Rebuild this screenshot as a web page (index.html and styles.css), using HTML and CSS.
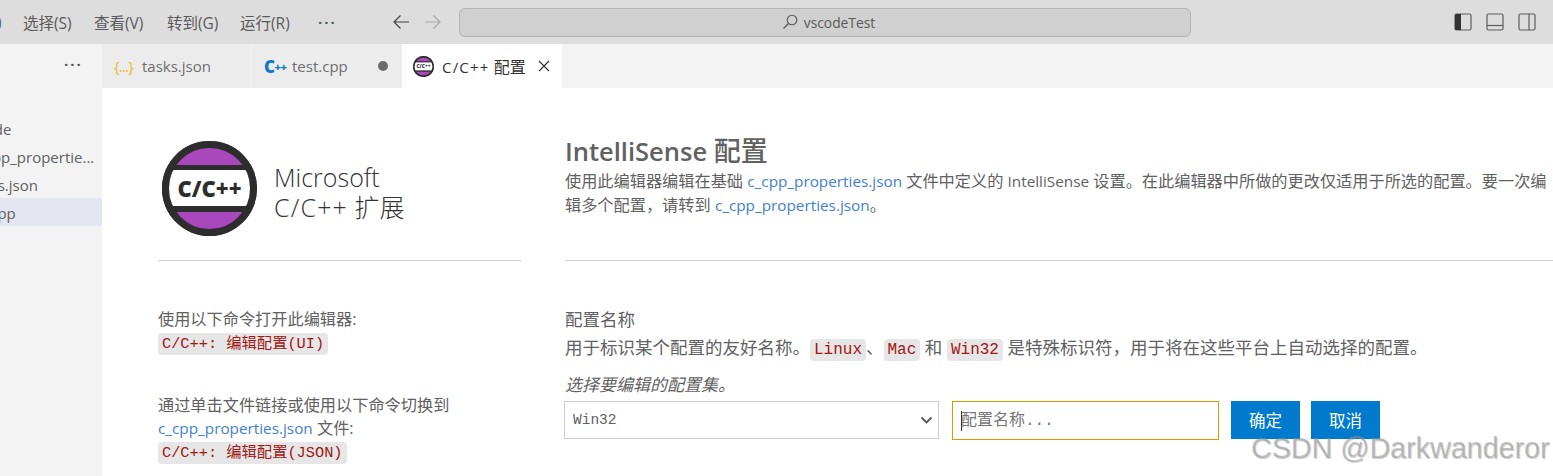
FILE: index.html
```html
<!DOCTYPE html>
<html lang="zh-CN">
<head>
<meta charset="utf-8">
<title>C/C++ 配置</title>
<link rel="stylesheet" href="styles.css">
</head>
<body>
<div class="app">
  <header class="titlebar">
    <nav class="menu">
      <span class="menu-clip">)</span>
      <span class="menu-item">选择(S)</span>
      <span class="menu-item">查看(V)</span>
      <span class="menu-item">转到(G)</span>
      <span class="menu-item">运行(R)</span>
      <span class="menu-more">···</span>
    </nav>
    <div class="nav-arrows">
      <svg class="arrow" viewBox="0 0 18 16"><path d="M17 8H2M8.5 1.5 2 8l6.5 6.5" fill="none" stroke="#424242" stroke-width="1.2"/></svg>
      <svg class="arrow" viewBox="0 0 18 16"><path d="M1 8h15M9.500 1.500 16 8l-6.500 6.500" fill="none" stroke="#a8a8a8" stroke-width="1.2"/></svg>
    </div>
    <div class="search">
      <svg class="search-icon" viewBox="0 0 16 16"><circle cx="10" cy="6" r="4.800" fill="none" stroke="#555" stroke-width="1.100"/><path d="M6.500 9.500 1.500 14.500" stroke="#555" stroke-width="1.200"/></svg>
      <span>vscodeTest</span>
    </div>
    <div class="layout-icons">
      <svg class="layout-icon" viewBox="0 0 18 18"><rect x="1" y="1" width="16" height="16" rx="1.500" fill="none" stroke="#5c5c5c" stroke-width="1.200"/><path d="M1 2.500A1.500 1.500 0 0 1 2.500 1H7v16H2.500A1.500 1.500 0 0 1 1 15.500z" fill="#333"/></svg>
      <svg class="layout-icon" viewBox="0 0 18 18"><rect x="1" y="1" width="16" height="16" rx="1.500" fill="none" stroke="#5c5c5c" stroke-width="1.200"/><path d="M1 12.500h16" stroke="#5c5c5c" stroke-width="1.200"/></svg>
      <svg class="layout-icon" viewBox="0 0 18 18"><rect x="1" y="1" width="16" height="16" rx="1.500" fill="none" stroke="#5c5c5c" stroke-width="1.200"/><path d="M11 1v16" stroke="#5c5c5c" stroke-width="1.200"/></svg>
    </div>
  </header>

  <div class="workbench">
    <aside class="sidebar">
      <div class="sidebar-head"><span class="sidebar-more">···</span></div>
      <ul class="files">
        <li class="file"><span class="file-name clip-a">.vscode</span></li>
        <li class="file"><span class="file-name clip-b">c_cpp_propertie...</span></li>
        <li class="file"><span class="file-name clip-c">tasks.json</span></li>
        <li class="file is-selected"><span class="file-name clip-d">test.cpp</span></li>
      </ul>
    </aside>

    <main class="main">
      <div class="tabs">
        <div class="tab tab-tasks"><span class="json-icon">{...}</span><span>tasks.json</span></div>
        <div class="tab tab-cpp"><span class="cpp-icon">C<span class="cpp-plus">++</span></span><span>test.cpp</span><i class="dirty"></i></div>
        <div class="tab tab-active">
          <svg class="tab-logo" viewBox="0 0 95 95"><use href="#cpp-logo"/></svg>
          <span><span class="tab-latin">C/C++</span> 配置</span>
          <svg class="tab-close" viewBox="0 0 12 12"><path d="M1 1l10 10M11 1 1 11" stroke="#333" stroke-width="1.200"/></svg>
        </div>
      </div>

      <div class="editor">
        <section class="col-left">
          <div class="brand">
            <svg class="logo" viewBox="0 0 95 95">
              <defs>
                <clipPath id="disc"><circle cx="47.500" cy="47.500" r="45"/></clipPath>
                <g id="cpp-logo">
                  <circle cx="47.500" cy="47.500" r="47.500" fill="#2d2d2d"/>
                  <g clip-path="url(#disc)">
                    <rect x="0" y="6" width="95" height="83" fill="#a947bd"/>
                    <rect x="0" y="24" width="95" height="47" fill="#2d2d2d"/>
                    <rect x="0" y="29" width="95" height="36" fill="#fff"/>
                  </g>
                  <circle cx="47.500" cy="47.500" r="44" fill="none" stroke="#2d2d2d" stroke-width="7"/>
                  <text x="47.500" y="55.500" text-anchor="middle" class="logo-text">C/C++</text>
                </g>
              </defs>
              <use href="#cpp-logo"/>
            </svg>
            <div class="brand-text">Microsoft<br><span class="brand-latin">C/C++</span> 扩展</div>
          </div>
          <div class="left-notes">
            <p class="note">使用以下命令打开此编辑器:<br><code class="cmd">C/C++: 编辑配置(UI)</code></p>
            <p class="note">通过单击文件链接或使用以下命令切换到<br><a class="link">c_cpp_properties.json</a> 文件:<br><code class="cmd">C/C++: 编辑配置(JSON)</code></p>
          </div>
        </section>

        <section class="col-right">
          <div class="intro">
            <h1 class="title">IntelliSense <span class="title-cjk">配置</span></h1>
            <p class="intro-text">使用此编辑器编辑在基础 <a class="link">c_cpp_properties.json</a> 文件中定义的 <span class="latin">IntelliSense</span> 设置。在此编辑器中所做的更改仅适用于所选的配置。要一次编<br>辑多个配置，请转到 <a class="link">c_cpp_properties.json</a>。</p>
          </div>
          <div class="setting">
            <div class="setting-name">配置名称</div>
            <div class="setting-desc">用于标识某个配置的友好名称。<code class="tag">Linux</code>、<code class="tag">Mac</code> 和 <code class="tag">Win32</code> 是特殊标识符，用于将在这些平台上自动选择的配置。</div>
            <div class="setting-hint">选择要编辑的配置集。</div>
            <div class="controls">
              <div class="select-wrap">
                <select class="select"><option>Win32</option></select>
                <svg class="chevron" viewBox="0 0 12 8"><path d="M1 1.500 6 6.500 11 1.500" fill="none" stroke="#555" stroke-width="1.800"/></svg>
              </div>
              <div class="input-wrap">
                <input class="name-input" placeholder="配置名称...">
                <i class="caret"></i>
              </div>
              <button class="btn btn-ok">确定</button>
              <button class="btn">取消</button>
            </div>
          </div>
        </section>
      </div>
    </main>
  </div>
  <div class="watermark">CSDN @Darkwanderor</div>
</div>
</body>
</html>
```

FILE: styles.css
```css
* { box-sizing: border-box; }
html, body { margin: 0; padding: 0; height: 100%; overflow: hidden; background: #fff; }
body { font-family: "Open Sans", "Noto Sans CJK SC", sans-serif; color: #616161; }
.app { position: relative; width: 1553px; height: 476px; overflow: hidden; display: flex; flex-direction: column; }

/* title bar */
.titlebar { flex: none; height: 44px; background: #dddddd; display: flex; align-items: center; }
.menu { width: 392px; display: flex; align-items: center; font-size: 15.500px; color: #5a5a5a; overflow: hidden; }
.menu-clip { width: 3px; margin-left: -3px; flex: none; padding-right: 6px; box-sizing: content-box; }
.menu-item { flex: none; width: 52px; margin-right: 21px; white-space: nowrap; }
.menu-clip + .menu-item { margin-left: 17px; margin-right: 19px; }
.menu-more { margin-left: 5px; font-weight: 700; font-size: 15px; letter-spacing: 2px; color: #555; }
.nav-arrows { width: 67px; display: flex; gap: 14px; }
.arrow { width: 18px; height: 16px; }
.search { width: 732px; height: 29px; background: #d0d0d0; border: 1px solid #b4b4b4; border-radius: 6px; display: flex; align-items: center; justify-content: center; gap: 6px; font-size: 13.800px; color: #5a5a5a; padding-left: 7px; }
.search-icon { width: 16px; height: 16px; }
.layout-icons { margin-left: 263px; display: flex; gap: 14px; }
.layout-icon { width: 18px; height: 18px; }

/* workbench */
.workbench { flex: 1; display: flex; min-height: 0; }
.sidebar { width: 102px; flex: none; background: #f3f3f3; overflow: hidden; }
.sidebar-head { height: 70px; padding-top: 9px; padding-left: 64px; }
.sidebar-more { font-weight: 700; font-size: 15px; letter-spacing: 2px; color: #555; }
.files { list-style: none; margin: 0; padding: 0; }
.file { height: 28px; line-height: 30px; font-size: 15px; white-space: nowrap; color: #616161; overflow: hidden; }
.file.is-selected { background: #e4e6f1; }
.clip-a { margin-left: -41px; }
.clip-b { margin-left: -29px; }
.clip-c { margin-left: -31px; }
.clip-d { margin-left: -40px; }
.file-name { display: inline-block; }

.main { flex: 1; min-width: 0; display: flex; flex-direction: column; }
.tabs { flex: none; height: 44px; background: #f3f3f3; display: flex; font-size: 15px; color: #6f6f6f; }
.tab { height: 44px; display: flex; align-items: center; background: #ececec; white-space: nowrap; }
.tab-tasks { width: 149px; padding-left: 12px; gap: 8px; margin-right: 1px; }
.json-icon { color: #f2b824; font-family: "Open Sans", sans-serif; font-size: 15px; letter-spacing: -.8px; width: 20px; }
.tab-cpp { width: 150px; padding-left: 12px; gap: 7px; }
.cpp-icon { color: #0f78c8; font-family: "Open Sans", sans-serif; font-weight: 800; font-size: 17px; width: 21px; letter-spacing: -.5px; }
.cpp-plus { font-size: 11px; vertical-align: 2px; }
.dirty { width: 10px; height: 10px; border-radius: 50%; background: #6c6c6c; margin-left: 23px; }
.tab-active { width: 160px; background: #fff; padding-left: 11px; color: #333; gap: 8px; font-size: 16px; }
.tab-latin { font-size: 15px; letter-spacing: 1.200px; }
.tab-logo { width: 21px; height: 21px; }
.tab-close { width: 12px; height: 12px; margin-left: 4px; }

.editor { flex: 1; min-height: 0; display: flex; padding-left: 56px; gap: 44px; background: #fff; }
.col-left { width: 363px; flex: none; }
.col-right { width: 1000px; flex: none; }

.brand { height: 173px; border-bottom: 1px solid #d0d0d0; padding: 53px 0 0 4px; display: flex; gap: 17px; }
.logo { width: 95px; height: 95px; flex: none; }
.logo-text { font-family: "Open Sans", sans-serif; font-weight: 800; font-size: 22px; fill: #2d2d2d; }
.brand-text { font-size: 25px; line-height: 30px; padding-top: 21px; color: #333; font-weight: 300; white-space: nowrap; }
.brand-latin { letter-spacing: 1.200px; }

.left-notes { padding-top: 47px; }
.note { margin: 0 0 37px; font-size: 16.200px; line-height: 23.300px; color: #616161; }
.cmd, .tag { font-family: "Liberation Mono", "Noto Sans CJK SC", monospace; color: #a31515; background: #e6e6e6; border-radius: 4px; }
.cmd { font-size: 15.300px; padding: 2px 4px; }
.link { color: #3f7fd2; font-size: 15.300px; }
.latin { font-size: 15.300px; }

.intro { height: 173px; border-bottom: 1px solid #d0d0d0; padding-top: 46px; }
.title { margin: 0; font-size: 25.500px; line-height: 34px; font-weight: 600; color: #616161; }
.title-cjk { font-size: 27px; font-weight: 500; }
.intro-text { margin: 1px 0 0; font-size: 16.200px; line-height: 24px; white-space: nowrap; }

.setting { padding-top: 46px; }
.setting-name { font-size: 17.500px; line-height: 24px; }
.setting-desc { font-size: 17.500px; line-height: 32px; white-space: nowrap; }
.tag { font-size: 16px; padding: 2px 4px; }
.setting-hint { font-size: 17px; line-height: 24px; font-style: italic; margin-top: 7px; margin-bottom: 4px; }
.controls { display: flex; align-items: flex-start; margin-left: -1px; }
.select-wrap { position: relative; width: 375px; height: 38px; }
.select { appearance: none; width: 100%; height: 100%; background: #fff; border: 1px solid #cecece; border-radius: 0; font-family: "Liberation Mono", monospace; font-size: 14.500px; color: #616161; padding-left: 8px; }
.chevron { position: absolute; right: 6px; top: 15px; width: 13px; height: 8px; }
.input-wrap { position: relative; width: 267px; height: 39px; margin-left: 13px; }
.name-input { width: 100%; height: 100%; border: 1px solid #e59700; border-radius: 0; outline: none; padding: 0 8px; font-family: "Liberation Mono", "Noto Sans CJK SC", monospace; font-size: 16px; background: #fff; }
.name-input::placeholder { color: #767676; opacity: 1; }
.caret { position: absolute; left: 9px; top: 10px; width: 1px; height: 20px; background: #333; }
.btn { width: 69px; height: 38px; margin-left: 11px; border: none; background: #007acc; color: #fff; font-family: "Open Sans", "Noto Sans CJK SC", sans-serif; font-size: 16.500px; padding: 0; }
.btn-ok { margin-left: 12px; }

.watermark { position: absolute; left: 1251px; top: 432px; font-family: "Liberation Sans", sans-serif; font-size: 28.700px; line-height: 32px; white-space: nowrap; color: rgba(150,150,150,.55); text-shadow: 1px 1px 1px rgba(120,120,120,.35); }
```
